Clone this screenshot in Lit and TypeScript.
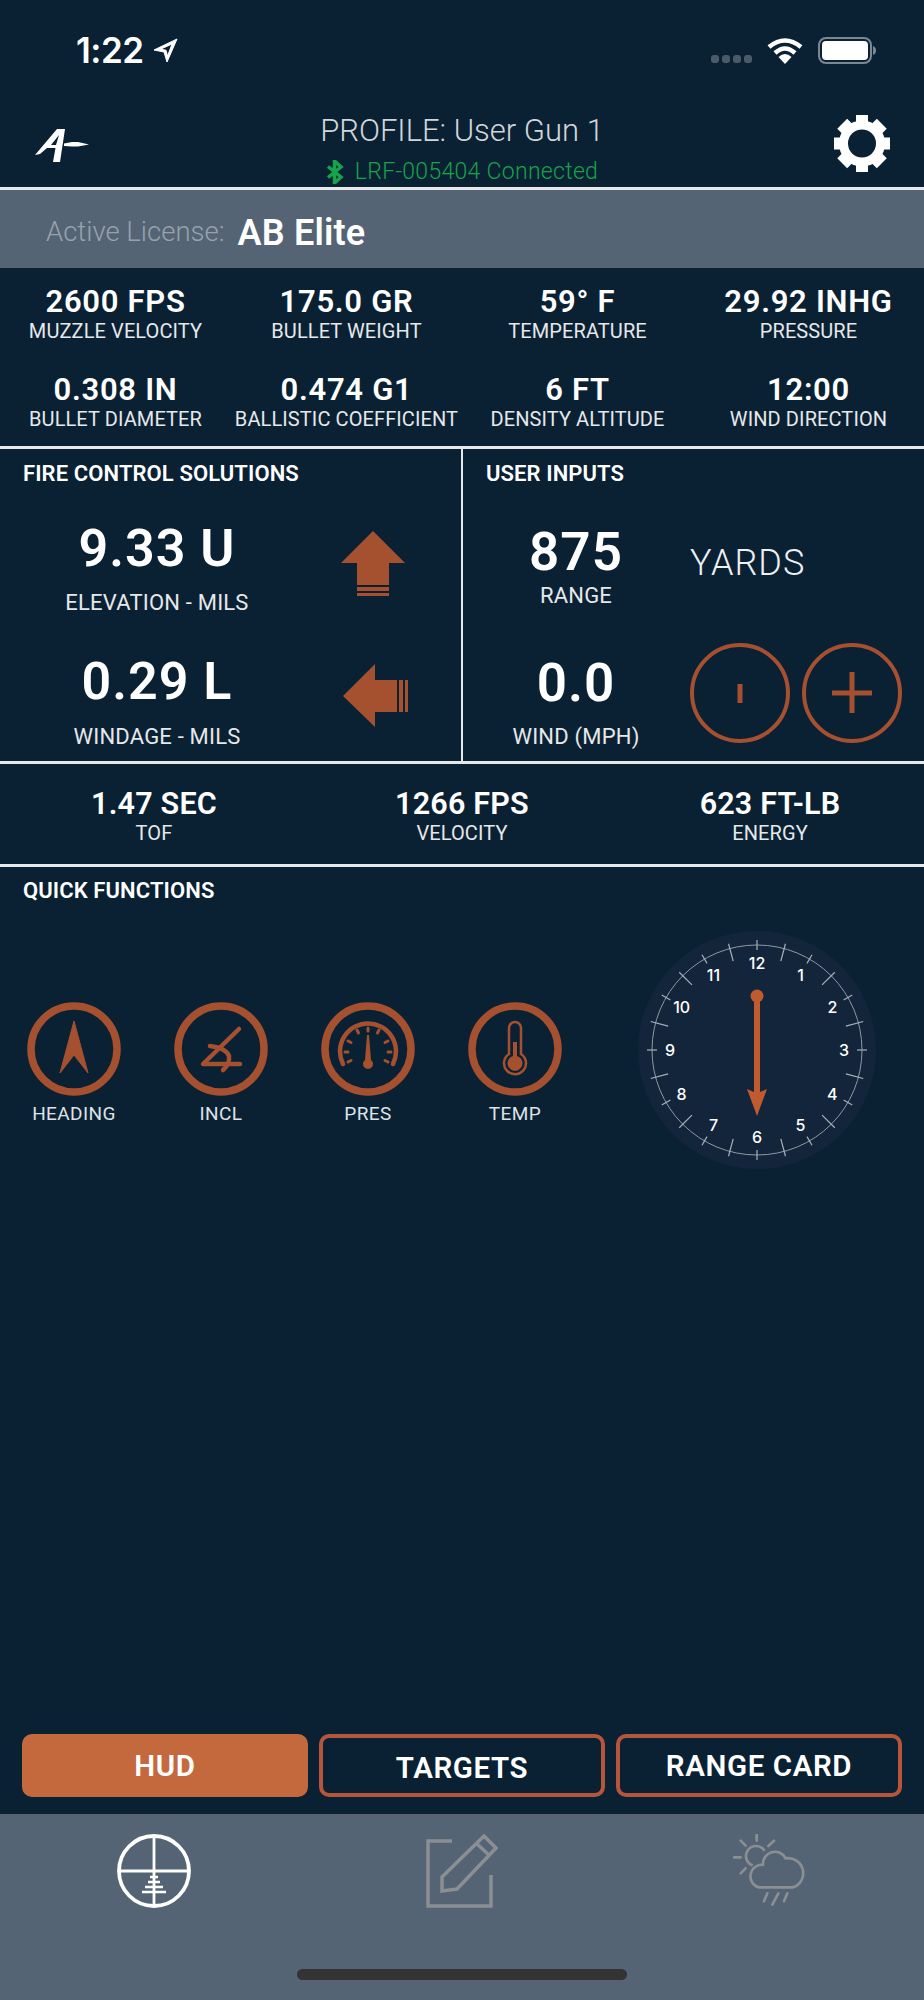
import { LitElement, html, css, svg } from "lit";
import { customElement } from "lit/decorators.js";

const top = [
  ["2600 FPS", "MUZZLE VELOCITY"], ["175.0 GR", "BULLET WEIGHT"], ["59° F", "TEMPERATURE"], ["29.92 INHG", "PRESSURE"],
  ["0.308 IN", "BULLET DIAMETER"], ["0.474 G1", "BALLISTIC COEFFICIENT"], ["6 FT", "DENSITY ALTITUDE"], ["12:00", "WIND DIRECTION"],
];
const tof = [["1.47 SEC", "TOF"], ["1266 FPS", "VELOCITY"], ["623 FT-LB", "ENERGY"]];

function ticks() {
  const out = [];
  for (let i = 0; i < 24; i++) {
    const a = (i * 15 * Math.PI) / 180;
    const r1 = i % 2 === 0 ? 100 : 92;
    const r2 = 110;
    out.push(svg`<line x1=${119 + r1 * Math.sin(a)} y1=${119 - r1 * Math.cos(a)} x2=${119 + r2 * Math.sin(a)} y2=${119 - r2 * Math.cos(a)} />`);
  }
  return out;
}
function nums() {
  const out = [];
  for (let i = 1; i <= 12; i++) {
    const a = (i * 30 * Math.PI) / 180;
    out.push(svg`<text x=${119 + 87 * Math.sin(a)} y=${119 - 87 * Math.cos(a) + 6}>${i}</text>`);
  }
  return out;
}

@customElement("app-root")
export class AppRoot extends LitElement {
  static styles = css`
    :host { display: block; width: 924px; height: 2000px; background: #0a2134; color: #fff; font-family: "Roboto", sans-serif; overflow: hidden; }
    .page { display: flex; flex-direction: column; height: 2000px; }
    svg { display: block; flex: none; }
    .status { height: 100px; flex: none; display: flex; align-items: center; padding: 0 48px 0 76px; box-sizing: border-box; }
    .time { font: 600 35px "Inter", sans-serif; letter-spacing: -0.5px; }
    .status .arrow { margin-left: 9px; }
    .spacer { flex: 1; }
    .dots { display: flex; gap: 3px; margin-right: 15px; margin-top: 18px; }
    .dots i { width: 8px; height: 8px; border-radius: 3px; background: #4a5a6a; }
    .batt { margin-left: 15px; }
    .header { height: 87px; flex: none; display: grid; grid-template-columns: 200px 1fr 200px; align-items: center; padding: 0 34px; box-sizing: border-box; }
    .center { display: flex; flex-direction: column; align-items: center; }
    .profile { font-size: 31px; font-weight: 300; line-height: 40px; color: #d2d6da; margin-top: 8px; }
    .conn { display: flex; align-items: center; gap: 11px; color: #16a34a; font-size: 23px; font-weight: 300; line-height: 24px; margin-top: 9px; letter-spacing: .3px; }
    .gear { justify-self: end; }
    .logo { margin-top: 2px; }
    .hr { height: 3px; background: #e6e8ea; flex: none; }
    .license { height: 78px; flex: none; background: #546474; display: flex; align-items: center; padding-left: 46px; }
    .license span { font-size: 27.5px; font-weight: 300; color: #98a2ac; padding-top: 5px; }
    .license b { font-size: 36px; margin-left: 13px; letter-spacing: .2px; font-weight: 600; padding-top: 7px; }
    .stats { height: 178px; flex: none; display: grid; grid-template-columns: repeat(4, 231px); grid-template-rows: 1fr 1fr; padding-top: 2px; box-sizing: border-box; }
    .stat { display: flex; flex-direction: column; align-items: center; justify-content: center; }
    .stat b { font-size: 31px; line-height: 34px; letter-spacing: .7px; white-space: nowrap; font-weight: 600; }
    .stat span { font-size: 20px; line-height: 24px; color: #e6e8ea; letter-spacing: .1px; white-space: nowrap; }
    .fire { height: 312px; flex: none; display: grid; grid-template-columns: 461px 2px 461px; }
    .vr { background: #e6e8ea; }
    .h3 { font-size: 22px; font-weight: 600; line-height: 26px; letter-spacing: .1px; white-space: nowrap; }
    .fc { padding: 12px 0 0 23px; display: flex; flex-direction: column; }
    .row { display: grid; grid-template-columns: 314px 1fr; align-items: center; height: 128px; margin-left: -23px; }
    .big { display: flex; flex-direction: column; align-items: center; }
    .big b { font-size: 52px; line-height: 60px; letter-spacing: 1px; white-space: nowrap; font-weight: 600; }
    .big span { font-size: 22px; line-height: 26px; margin-top: 11px; letter-spacing: .2px; white-space: nowrap; color: #e6e8ea; }
    .r1 { margin-top: 11px; }
    .r2 { margin-top: 3px; }
    .r1 .big { padding-top: 10px; }
    .r2 .big { padding-top: 15px; }
    .r2 .big span { margin-top: 12px; }
    .arr-up { margin-left: 27px; margin-top: 2px; }
    .arr-left { margin-left: 29px; margin-top: 4px; }
    .ui { padding: 12px 0 0 23px; }
    .urow { display: flex; margin-left: -23px; height: 128px; align-items: center; }
    .urow .big { width: 226px; }
    .urow .big b { font-size: 53px; }
    .urow.r1 .big { padding-top: 6px; }
    .urow.r1 .big span { margin-top: 1px; }
    .urow.r2 .big { padding-top: 16px; }
    .urow.r2 .big span { margin-top: 11px; }
    .yards { font-size: 36px; font-weight: 300; margin-top: 1px; margin-left: 1px; letter-spacing: 1px; color: #eef0f2; }
    .btns { display: flex; gap: 12px; margin-left: 1px; }
    .tof { height: 100px; flex: none; display: grid; grid-template-columns: repeat(3, 308px); padding-top: 3px; box-sizing: border-box; }
    .tof .stat b { font-size: 30.5px; letter-spacing: .2px; }
    .quick { flex: 1; padding: 11px 0 0 0; display: flex; flex-direction: column; }
    .quick .h3 { padding-left: 23px; }
    .qrow { display: flex; align-items: flex-start; padding-left: 27px; margin-top: 25px; }
    .qi { width: 94px; margin-right: 53px; display: flex; flex-direction: column; align-items: center; margin-top: 73px; }
    .qi span { font-size: 19px; line-height: 22px; margin-top: 7px; letter-spacing: .4px; color: #dfe2e6; }
    .clock { margin-left: 23px; margin-top: 2px; }
    .tabsbtn { display: flex; gap: 11px; padding: 0 22px; flex: none; height: 63px; margin-bottom: 17px; }
    .b { flex: 1; border-radius: 10px; box-sizing: border-box; border: 4px solid #b5553a; display: flex; align-items: center; justify-content: center; font-size: 29.5px; font-weight: 600; letter-spacing: .6px; }
    .b.on { background: #c4693d; border-color: #c4693d; }
    .b.low { padding-top: 4px; }
    .tabbar { height: 186px; flex: none; background: #546474; display: flex; flex-direction: column; align-items: center; }
    .tabicons { display: grid; grid-template-columns: 308px 308px 308px; width: 924px; padding-top: 20px; height: 117px; box-sizing: border-box; justify-items: center; }
    .home { width: 330px; height: 11px; border-radius: 6px; background: #333; margin-top: 38px; }
  `;

  render() {
    const o = "#a5502f";
    return html`<div class="page">
      <div class="status">
        <span class="time">1:22</span>
        <svg class="arrow" width="25" height="25" viewBox="0 0 25 25"><path d="M24 1 L1 12 L11 14 L14 24 Z M19 6 L7.5 11.2 L13 12.2 L14.6 18 Z" fill="#fff" fill-rule="evenodd" stroke="#fff" stroke-width="1" stroke-linejoin="round"/></svg>
        <span class="spacer"></span>
        <div class="dots"><i></i><i></i><i></i><i></i></div>
        <svg width="36" height="27" viewBox="0 0 36 27" fill="none" stroke="#fff" stroke-width="4.5"><path d="M2 10 Q18 -3 34 10"/><path d="M8 16 Q18 7 28 16"/><path d="M18 27 L11.5 20 Q18 14 24.5 20 Z" fill="#fff" stroke="none"/></svg>
        <svg class="batt" width="58" height="27" viewBox="0 0 58 27"><rect x="1" y="1" width="52" height="25" rx="7" fill="none" stroke="#7b8894" stroke-width="2"/><rect x="4" y="4" width="46" height="19" rx="4" fill="#fff"/><path d="M55 9 Q58 10 58 13.5 Q58 17 55 18 Z" fill="#7b8894"/></svg>
      </div>
      <div class="header">
        <svg class="logo" width="56" height="38" viewBox="0 0 56 38"><path d="M23 3 L31 3 L26 36 L19 36 L21.5 22 L13 22 L6 28 L1 29 Z M17 19 L22 19 L25 9 Z" fill="#fff" fill-rule="evenodd"/><path d="M30 17.5 L38 16 H44 L55 18.5 L44 20.5 H38 L30 20 Z" fill="#fff"/></svg>
        <div class="center">
          <div class="profile">PROFILE: User Gun 1</div>
          <div class="conn">
            <svg width="18" height="24" viewBox="0 0 18 24"><path d="M2 6.5 L15 17 L8.5 23 V1 L15 7 L2 17.5" fill="none" stroke="#16a34a" stroke-width="3.5"/></svg>
            LRF-005404 Connected
          </div>
        </div>
        <svg class="gear" width="56" height="57" viewBox="0 0 56 57">
          <g fill="#fff"><rect x="22" y="0" width="12" height="57"/><rect x="21" y="0.5" width="14" height="56" transform="rotate(45 28 28.5)"/><rect x="22" y="0" width="12" height="57" transform="rotate(90 28 28.5)"/><rect x="21" y="0.5" width="14" height="56" transform="rotate(135 28 28.5)"/></g>
          <circle cx="28" cy="28.5" r="18.5" fill="none" stroke="#fff" stroke-width="9"/><circle cx="28" cy="28.5" r="14" fill="#0a2134"/>
        </svg>
      </div>
      <div class="hr"></div>
      <div class="license"><span>Active License:</span><b>AB Elite</b></div>
      <div class="stats">${top.map(([v, l]) => html`<div class="stat"><b>${v}</b><span>${l}</span></div>`)}</div>
      <div class="hr"></div>
      <div class="fire">
        <div class="fc">
          <div class="h3">FIRE CONTROL SOLUTIONS</div>
          <div class="row r1">
            <div class="big"><b>9.33 U</b><span>ELEVATION - MILS</span></div>
            <svg class="arr-up" width="64" height="65" viewBox="0 0 64 65"><path d="M32 0 L64 32 H48 V54 H16 V32 H0 Z M16 56 H48 V60 H16 Z M16 62 H48 V65 H16 Z" fill="${o}"/></svg>
          </div>
          <div class="row r2">
            <div class="big"><b>0.29 L</b><span>WINDAGE - MILS</span></div>
            <svg class="arr-left" width="65" height="63" viewBox="0 0 65 63"><path d="M0 32 L32 0 V16 H54 V48 H32 V63 Z M56 16 H60 V48 H56 Z M62 16 H65 V48 H62 Z" fill="${o}"/></svg>
          </div>
        </div>
        <div class="vr"></div>
        <div class="ui">
          <div class="h3">USER INPUTS</div>
          <div class="urow r1">
            <div class="big"><b>875</b><span>RANGE</span></div>
            <div class="yards">YARDS</div>
          </div>
          <div class="urow r2">
            <div class="big"><b>0.0</b><span>WIND (MPH)</span></div>
            <div class="btns">
              <svg width="100" height="100" viewBox="0 0 100 100"><circle cx="50" cy="50" r="48" fill="none" stroke="${o}" stroke-width="4"/><line x1="50" y1="41" x2="50" y2="60" stroke="${o}" stroke-width="5"/></svg>
              <svg width="100" height="100" viewBox="0 0 100 100"><circle cx="50" cy="50" r="48" fill="none" stroke="${o}" stroke-width="4"/><path d="M30 50 H70 M50 29 V70" stroke="${o}" stroke-width="5" fill="none"/></svg>
            </div>
          </div>
        </div>
      </div>
      <div class="hr"></div>
      <div class="tof">${tof.map(([v, l]) => html`<div class="stat"><b>${v}</b><span>${l}</span></div>`)}</div>
      <div class="hr"></div>
      <div class="quick">
        <div class="h3">QUICK FUNCTIONS</div>
        <div class="qrow">
          <div class="qi">
            <svg width="94" height="94" viewBox="0 0 94 94"><circle cx="47" cy="47" r="43" fill="none" stroke="${o}" stroke-width="7.5"/><path d="M47 19 L61 71 L47 53 L33 71 Z" fill="${o}" stroke="${o}" stroke-linejoin="round"/></svg>
            <span>HEADING</span>
          </div>
          <div class="qi">
            <svg width="94" height="94" viewBox="0 0 94 94" fill="none" stroke="${o}" stroke-width="4.5" stroke-linecap="round" stroke-linejoin="round"><circle cx="47" cy="47" r="43" stroke-width="7.5"/><path d="M65 27 L29 62 H66"/><path d="M36 44 Q52 46 55 54 Q56 62 49 68"/></svg>
            <span>INCL</span>
          </div>
          <div class="qi">
            <svg width="94" height="94" viewBox="0 0 94 94" fill="none" stroke="${o}"><circle cx="47" cy="47" r="43" stroke-width="7.5"/><path d="M22 62 A28 28 0 1 1 72 62" stroke-width="4.5" stroke-linecap="round"/><path d="M47 26 V29 M36 28 L37.5 31 M58 28 L56.5 31 M27 39 L30 40.5 M67 39 L64 40.5 M24 50 H27 M70 50 H67 M27 60 L30 58.5 M67 60 L64 58.5" stroke-width="3" stroke-linecap="round"/><path d="M46 33 H48 L50 58 A5 5 0 1 1 44 58 Z" fill="${o}" stroke="none"/></svg>
            <span>PRES</span>
          </div>
          <div class="qi">
            <svg width="94" height="94" viewBox="0 0 94 94" fill="none" stroke="${o}"><circle cx="47" cy="47" r="43" stroke-width="7.5"/><path d="M41 26 A6 6 0 0 1 53 26 V52 A11 11 0 1 1 41 52 Z" stroke-width="2.5"/><path d="M45 40 H49 V54 A7.5 7.5 0 1 1 45 54 Z" fill="${o}" stroke="none"/></svg>
            <span>TEMP</span>
          </div>
          <svg class="clock" width="238" height="238" viewBox="0 0 238 238">
            <circle cx="119" cy="119" r="119" fill="#13253a"/>
            <circle cx="119" cy="119" r="105" fill="none" stroke="#8d99a5" stroke-width="1"/>
            <g stroke="#a8b1ba" stroke-width="1.2">${ticks()}</g>
            <g fill="#fff" font-family="Inter, sans-serif" font-size="16" font-weight="500" text-anchor="middle">${nums()}</g>
            <circle cx="119" cy="65" r="6.5" fill="#bf5b2e"/>
            <path d="M116 65 H122 V161 L129 158 L119 185 L109 158 L116 161 Z" fill="#bf5b2e"/>
          </svg>
        </div>
      </div>
      <div class="tabsbtn">
        <div class="b on">HUD</div><div class="b low">TARGETS</div><div class="b">RANGE CARD</div>
      </div>
      <div class="tabbar">
        <div class="tabicons">
          <svg width="74" height="74" viewBox="0 0 74 74" fill="none" stroke="#fff" stroke-width="2.8"><circle cx="37" cy="37" r="35" stroke-width="3.8"/><path d="M37 2 V72 M2 37 H72"/><path d="M33 43 H41 M31 48 H43 M28 53 H46 M25 58 H49" stroke-width="2.4"/></svg>
          <svg width="72" height="74" viewBox="0 0 72 74" fill="none" stroke="#8a8f93" stroke-width="3.5"><path d="M26 7 H2 V72 H65 V41"/><path d="M58 2 L70 14 L31 55 L16 57 L16 43 Z"/><path d="M50 9 L63 21"/></svg>
          <svg width="74" height="74" viewBox="42 30 222 222" fill="none" stroke="#8a8f93" stroke-width="8" stroke-linecap="round"><path d="M135 78 A30 30 0 1 0 98 123"/><path d="M113 32 V50 M65 50 L80 65 M165 50 L148 66 M45 100 H65 M65 148 L80 133"/><path d="M118 190 A35 35 0 0 1 132 122 A36 36 0 0 1 200 103 A45 45 0 0 1 222 190 Z"/><path d="M145 208 L135 232 M178 208 L160 242 M205 208 L195 232"/></svg>
        </div>
        <div class="home"></div>
      </div>
    </div>`;
  }
}
